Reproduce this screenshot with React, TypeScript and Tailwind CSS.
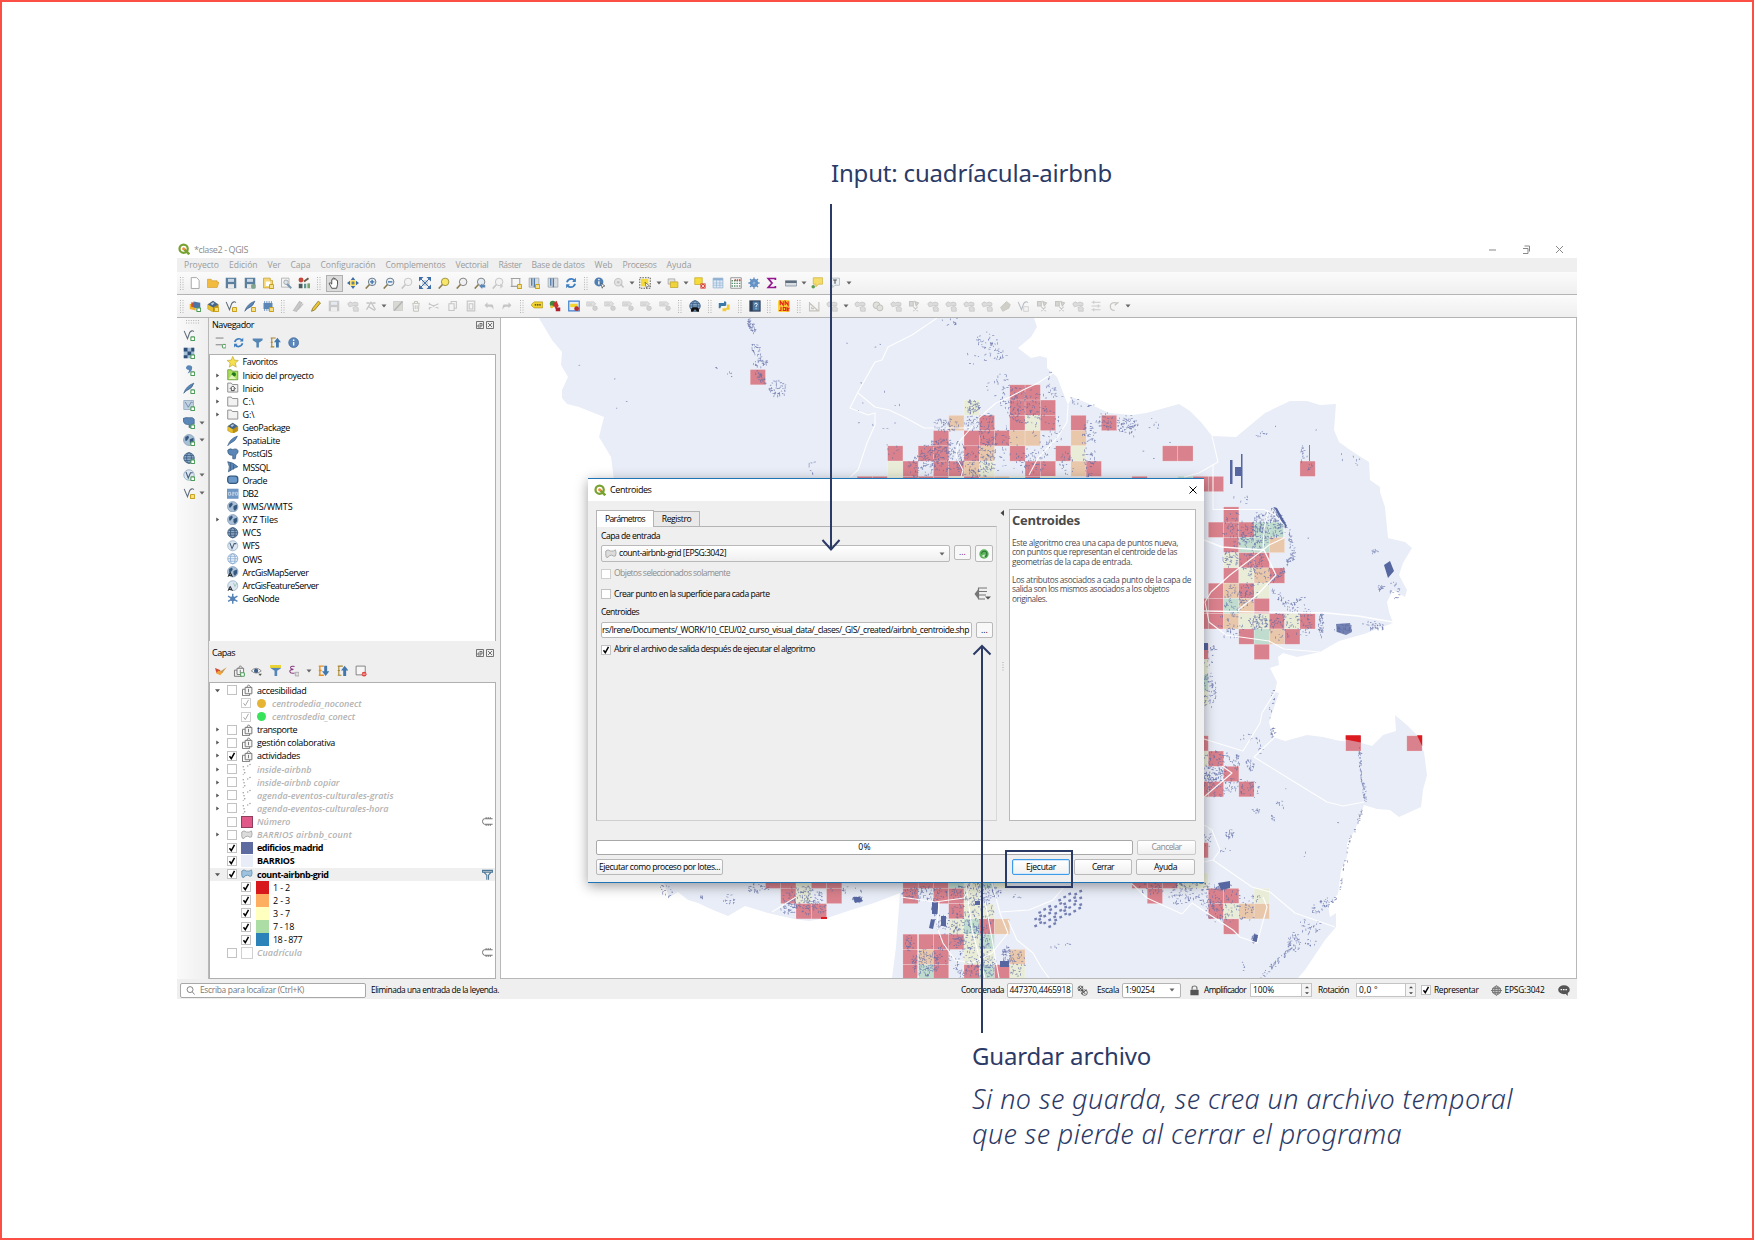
import React, { useLayoutEffect, useRef, useState } from 'react';

/* ---------- text that fills a given width ---------- */
function T({ w, children, className = '' }: { w: number; children: string; className?: string }) {
  const ref = useRef<HTMLSpanElement>(null);
  const [ls, setLs] = useState(0);
  useLayoutEffect(() => {
    if (ref.current) {
      const natural = ref.current.getBoundingClientRect().width;
      setLs((w - natural) / children.length);
    }
  }, []);
  return (
    <span ref={ref} className={'inline-block shrink-0 whitespace-pre ' + className} style={{ letterSpacing: ls }}>
      {children}
    </span>
  );
}

/* ---------- icons, all on a 16 unit grid ---------- */
const B = '#5b87b8';
const D = '#35587f';
const plus = <rect x="10.5" y="10.5" width="5" height="5" rx="1" fill="#fff" stroke="#4a9a55" strokeWidth="1.4" />;
const yplus = <rect x="10" y="10" width="5.5" height="5.5" rx="1" fill="#f7e08a" stroke="#c9a21c" strokeWidth="1.4" />;
const lens = (fill: string, stroke: string) => (
  <g>
    <circle cx="9.5" cy="6.5" r="5" fill={fill} stroke={stroke} strokeWidth="1.2" />
    <path d="M6 10L1 15.500" stroke="#8a7a50" strokeWidth="2" />
  </g>
);
const glens = (
  <g>
    <circle cx="9.5" cy="6.5" r="5" fill="#f3f3f3" stroke="#c4c4c4" strokeWidth="1.3" />
    <path d="M6 10L1 15.500" stroke="#c4c4c4" strokeWidth="2" />
  </g>
);
const globe = (f: string, s: string) => (
  <g fill="none" stroke={s} strokeWidth="1">
    <circle cx="8" cy="8" r="7" fill={f} />
    <ellipse cx="8" cy="8" rx="3.2" ry="7" />
    <path d="M1 8h14M2.2 4.6h11.6M2.2 11.4h11.6" />
  </g>
);
const earth = (
  <g>
    <circle cx="8" cy="8" r="7.3" fill="#a9bfd6" stroke="#6f8cab" strokeWidth=".8" />
    <path d="M3 4l4-2 1 3-3 4-2 0zM9 7l5-2 0 5-3 4-2-3z" fill={D} />
  </g>
);
const vee = <path d="M1.5 2.5L6 13L9 4.5Q12 1 14.5 3.5" fill="none" stroke="#5f6d7c" strokeWidth="1.4" />;
const feather = <path d="M1 15Q4 5 14.5 1.5Q13 8 4 12z" fill={B} stroke={D} strokeWidth=".8" />;
const folder = <path d="M1 14V1.500h5l1.500 2H15V14z" fill="#f2f2f2" stroke="#8b8b8b" strokeWidth="1.300" />;
const group = (
  <g fill="#f6f6f6" stroke="#777" strokeWidth="1.3">
    <path d="M5.500 4.500h9v8.500h-9z" />
    <path d="M5.500 7H2v8.500h9.500V13" fill="none" />
    <path d="M7.500 4.500L10 1l3.500 3.500M10 6.500v4.500" fill="none" />
  </g>
);
const poly = (f: string, s: string) => (
  <path d="M1 4q3-3 6 0 4 1 7-1.500 1.500 4 0 8-2 1.500-5-1-4 0-5 3-3 1-3-3z" fill={f} stroke={s} strokeWidth="1" />
);
const grayTool = (
  <g fill="#dcdcdc" stroke="#c2c2c2" strokeWidth=".9">
    <path d="M1 5q3-4.500 6.500-1 3-2.500 7 0v3.500H9L3 9z" />
    <path d="M8 10l4-1.500 3 2V15H9z" />
  </g>
);
const grayAbc = (
  <g fill="#e0e0e0" stroke="#c2c2c2" strokeWidth=".9">
    <path d="M1 2.500h9l3 2.500-3 3H1z" />
    <path d="M3 5.500h5" />
    <circle cx="12" cy="11" r="3" fill="#d3d3d3" />
  </g>
);
const refresh = (
  <g fill="none" stroke="#3f7fc0" strokeWidth="2.400">
    <path d="M2.500 7Q4 2.500 8.500 2.500q2.500 0 4 2" />
    <path d="M13.500 9Q12 13.500 7.500 13.500q-2.500 0-4-2" />
    <path d="M14.500 1v5.500H9.500zM1.500 15V9.500h5z" fill="#3f7fc0" stroke="none" />
  </g>
);
const geopkg = (
  <g>
    <path d="M1 6l7-4 7 4v6l-7 4-7-4z" fill="#e8c02c" stroke="#a8861a" strokeWidth=".6" />
    <path d="M8 9v7l7-4V6z" fill="#b98f14" />
    <path d="M1 6l7-5 7 5-7 4z" fill="#44658c" />
    <path d="M5 5l3-2 2 1-3 3z" fill="#b8cde4" />
  </g>
);
const table = (s: string, f: string) => (
  <g>
    <path d="M1.500 1.500h13v13h-13z" fill={f} stroke={s} />
    <path d="M1.500 3h13" stroke={s} strokeWidth="3" />
    <path d="M1.500 8h13M1.500 11h13M6 4v10M10.500 4v10" stroke={s} strokeWidth=".8" />
  </g>
);
const floppy = (c: string) => (
  <g>
    <path d="M1 1h14v14H1z" fill={c} />
    <path d="M4 2.500h8v4H4z" fill="#c9d8e6" />
    <path d="M4 9.500h8V15H4z" fill="#e9e9e9" />
  </g>
);
const book = (c: string) => (
  <g>
    <path d="M1.500 1.500h13v12h-13z" fill="#d9dde2" stroke="#9aa3ad" />
    <path d="M5 1.500v10M8.500 1.500v12" stroke={c} strokeWidth="1.800" />
  </g>
);
const funnel = <path d="M1 2h14v2.500L9.800 8v7H6.200V8L1 4.500z" fill="#5586b5" />;

const icons: Record<string, React.ReactNode> = {
  newf: <path d="M3 .8h7l3.500 3.500v11H3z" fill="#fff" stroke="#999" strokeWidth="1.100" />,
  open: <path d="M.5 14V3h5l1.500 2h6.500v2H16l-2.500 7z" fill="#f2bb3f" stroke="#cf972a" strokeWidth=".8" />,
  save: floppy('#5c7f9f'),
  saveas: <g>{floppy('#5c7f9f')}<rect x="9.500" y="9.500" width="6" height="6" rx="1.500" fill="#7fa38b" /></g>,
  layout: <g><path d="M2 1.500h9v3h3v10H2z" fill="#f3d774" stroke="#c59d2c" /><path d="M5 6h6v6H5z" fill="#fff" />{yplus}</g>,
  layouts: <g><path d="M2 1.500h10v12H2z" fill="#f4f4f4" stroke="#a5a5a5" /><path d="M7 7l8 8" stroke="#7695ae" strokeWidth="2.500" /><circle cx="8" cy="7" r="3" fill="#d8e4ee" stroke="#999" /></g>,
  style: <g><circle cx="4" cy="4" r="3.300" fill="#c7493c" /><path d="M8 6l6-4.500" stroke="#6d5a45" strokeWidth="2.500" /><path d="M1 9h5v6H1z" fill="#4d5d5c" /><path d="M8 9h3v6H8z" fill="#5d9690" /><path d="M12.500 8.500H16V15h-3.500z" fill="#7ca36a" /></g>,
  hand: <path d="M5 15L1.500 8.500l1.500-.8L5 9.500V3.500q1-1.500 1.800 0V1.800q1-1.300 2 0V3q1.200-1 2 .3v1q1.300-.8 1.900.5V10L11.500 15z" fill="#fff" stroke="#222" strokeWidth="1" />,
  pan: <g><rect x="4.500" y="4.500" width="7" height="7" fill="#f5d33c" /><path d="M8 0l3 4H5zM8 16l3-4H5zM0 8l4-3v6zM16 8l-4-3v6z" fill="#3d6da6" /><path d="M8 6v4M6 8h4" stroke="#3d6da6" strokeWidth="1.500" /></g>,
  zin: <g>{lens('#eef3f8', '#5a6b7c')}<path d="M9.500 3.500v6M6.500 6.500h6" stroke="#3f73aa" strokeWidth="1.800" /></g>,
  zout: <g>{lens('#eef3f8', '#5a6b7c')}<path d="M6.500 6.500h6" stroke="#3f73aa" strokeWidth="1.800" /></g>,
  z11: glens,
  zfull: <g><path d="M4 4h8v8H4z" fill="#ccd6e0" /><path d="M0 0h6L0 6zM16 0v6l-6-6zM0 16v-6l6 6zM16 16h-6l6-6z" fill="#3d6da6" /><path d="M2 2l12 12M14 2L2 14" stroke="#3d6da6" strokeWidth="1.300" /></g>,
  zsel: lens('#f8e66a', '#9b8c35'),
  zlay: lens('#f1f1f1', '#777'),
  zlast: <g>{lens('#e4edf5', '#777')}<path d="M7 12l4-3.500v2h4v3.500h-4v2z" fill="#5b87b8" /></g>,
  znext: <g>{glens}<path d="M15 12l-4-3.500v7z" fill="#ccc" /></g>,
  newmap: <g><path d="M2.500 2v11M1 2h13M13 2v10M1 12.500h9" stroke="#a0a0a0" strokeWidth="1.400" fill="none" />{yplus}</g>,
  bmk: <g>{book('#527ca8')}{yplus}</g>,
  bms: book('#527ca8'),
  refresh,
  ident: <g><circle cx="6.500" cy="6.500" r="6" fill="#4f7fb3" /><path d="M6.500 5.500V10M6.500 2.800v1.600" stroke="#fff" strokeWidth="1.800" /><path d="M9 8l5.500 4-2.500.5-1 2.500z" fill="#fff" stroke="#555" /></g>,
  gcog: <g><circle cx="7" cy="7" r="5" fill="#e4e4e4" stroke="#c4c4c4" strokeWidth="1.500" /><circle cx="7" cy="7" r="1.800" fill="#c4c4c4" /><path d="M10 9l4 5" stroke="#c4c4c4" strokeWidth="2" /></g>,
  selrect: <g><path d="M1 1h14v14H1z" fill="none" stroke="#555" strokeWidth="1.300" strokeDasharray="2 1.500" /><path d="M2.500 2.500h10v10h-10z" fill="#f4d93b" /><path d="M8 7l6 5-3 .5-1 2.500z" fill="#fff" stroke="#444" strokeWidth=".8" /></g>,
  selv: <g><path d="M1.500 2.500h9v7h-9z" fill="#e1e1e1" stroke="#a6a6a6" /><path d="M4.500 6.500h10v7.500h-10z" fill="#f0d23a" stroke="#c0a429" /></g>,
  desel: <g><path d="M1 1h10v9H1z" fill="#f6dc3a" stroke="#c7a928" /><path d="M8.500 8.500h7v7h-7z" fill="#d64a3d" /><path d="M10 10l4 4M14 10l-4 4" stroke="#fff" /></g>,
  table: table('#8fb0d0', '#dfeaf5'),
  abacus: <g><path d="M1 1h14v14H1z" fill="#fff" stroke="#777" /><path d="M2 5h12M2 8.500h12M2 12h12" stroke="#5c8f6d" strokeDasharray="2 1.300" strokeWidth="1.800" /><path d="M6 4h8" stroke="#c4453e" strokeWidth="2" strokeDasharray="2 1" /></g>,
  cog: <g><circle cx="8" cy="8" r="5" fill="#7fa6d4" stroke="#4f7fb6" /><path d="M8 .5v15M.5 8h15M2.700 2.700l10.600 10.600M13.300 2.700L2.700 13.300" stroke="#5c8cc2" strokeWidth="1.700" /><circle cx="8" cy="8" r="2" fill="#8fb3dd" /></g>,
  sigma: <path d="M12.500 4V2H3l5 6-5 6h9.500v-2" fill="none" stroke="#94168f" strokeWidth="2.300" />,
  ruler: <g><path d="M.5 5h15v7H.5z" fill="#d8dde2" stroke="#7e8a96" /><path d="M.5 5h15v3H.5z" fill="#5e6e7e" /></g>,
  tip: <g><path d="M3 1h12.500v8.500H10L6.500 13V9.500H3z" fill="#f5dd6b" stroke="#cfb343" /><circle cx="3" cy="13" r="2.400" fill="#5c9a55" /></g>,
  textann: <g><path d="M2 1.500h12v9.500H8L5 14v-3H2z" fill="#ecf0f3" stroke="#a9b4bc" /><path d="M5.500 4h5M8 4v5" stroke="#555" strokeWidth="1.500" /></g>,
  dsm: <g><path d="M1 5l8 2v7L1 12z" fill="#f0b12c" /><path d="M3 3l7 1v6l-7-1z" fill="#c9503b" /><path d="M6 2l9 1.500v8L6 10z" fill="#4d75a4" />{plus}</g>,
  geopkgn: <g>{geopkg}{yplus}</g>,
  veen: <g>{vee}{yplus}</g>,
  feathern: <g>{feather}{yplus}</g>,
  memn: <g><path d="M2 4h12v8H2z" fill={B} /><path d="M3.500 1.500v13M6.500 1.500v13M9.500 1.500v13M12.500 1.500v13" stroke={B} strokeWidth="1.200" />{yplus}</g>,
  gpencil: <path d="M2 14L10 2l3 2L6 15zM8 13L15 5" fill="#c9c9c9" stroke="#bdbdbd" strokeWidth="1.500" />,
  pencil: <path d="M2 15l1.500-4L11 1.500l3 2.500L6 13.500z" fill="#eec72f" stroke="#7d6b33" strokeWidth="1" />,
  gsave: <g opacity=".4">{floppy('#8a8a8a')}</g>,
  gtool: grayTool,
  gvert: <path d="M2 13L8 3l6 10M2 4h4M10 4h4M5 9l8 5" fill="none" stroke="#c2c2c2" strokeWidth="1.700" />,
  gmulti: <g><path d="M2 2h12v12H2z" fill="#d9d9d4" stroke="#c8c8c8" /><path d="M3 14L14 2" stroke="#b4b4b4" strokeWidth="2" /></g>,
  gtrash: <path d="M3 4.500h10M6 4V2h4v2M4 5l.8 10h6.400L12 5M7 7v5M9.500 7v5" fill="none" stroke="#c2c2bc" strokeWidth="1.300" />,
  gcut: <path d="M1 5l13 6M1 11l13-6M2 3.500v3M2 9.500v3" fill="none" stroke="#c6c6c6" strokeWidth="1.700" />,
  gcopy: <path d="M2.500 5h7v9h-7zM5.500 5V2h7v9H9.500" fill="none" stroke="#c6c6c6" strokeWidth="1.400" />,
  gpaste: <path d="M3 1.500h10v13H3zM5.500 5h5v7h-5z" fill="none" stroke="#c6c6c6" strokeWidth="1.500" />,
  gundo: <path d="M2 7l4-4v3h6q2 0 2 7-2-4-4-4H6v2z" fill="#c6c6c6" />,
  gredo: <path d="M14 7l-4-4v3H4Q2 6 2 13q2-4 4-4h4v2z" fill="#c6c6c6" />,
  abc: <g><path d="M4 2.500h11.500v8H4L0 6.500z" fill="#f3d42f" stroke="#b79b22" /><path d="M5 6.500h9" stroke="#333" strokeWidth="1.500" strokeDasharray="2 1" /></g>,
  pie: <g><circle cx="5" cy="5" r="4" fill="#3f8a3c" /><path d="M5 5l5-4 3 7-4 4z" fill="#c92f2f" /><rect x="9" y="10" width="6" height="5" fill="#a8232f" /><circle cx="3.500" cy="9" r="2" fill="#e9c02b" /></g>,
  lblb: <g><path d="M1 1.500h14v13H1z" fill="#e7eefb" stroke="#3f7fd0" strokeWidth="1.600" /><path d="M3 5h10v4.500H3z" fill="#f3d42f" /><circle cx="11.500" cy="11.500" r="3.200" fill="#b33030" /></g>,
  glabel: grayAbc,
  binoc: <g>{globe('#88a9cb', '#35587f')}<path d="M2.500 15.500q0-6 3.500-6h4q3.500 0 3.500 6H10q0-3-2-3t-2 3z" fill="#111" /></g>,
  python: <g><path d="M3 8V6h5V3Q8 1 10 2l1 1v4q0 1-2 1H5q-2 0-2 3-2-1 0-3z" fill="#3b78a8" /><path d="M1 4h8v4H4q-1 1-1 3H1z" fill="#3b78a8" /><path d="M12 6h3.500v7H11v2H6v-4h5q1-1 1-4z" fill="#f2cb3b" /></g>,
  help: <g><path d="M.5.500h15v15H.5z" fill="#2e3e57" /><path d="M5 2h9v12H5z" fill="#4f7ba7" /><path d="M7.500 6q0-1.800 1.800-1.800T11 6q0 1-1.600 2v1.500M9.400 11v1.300" stroke="#fff" strokeWidth="1.200" fill="none" /></g>,
  nn: (
    <g>
      <rect width="16" height="16" rx="2" fill="#fbd33b" />
      <path d="M3 7V1.500L7 7V1.500M9.500 7V1.500L13.500 7V1.500M4 9v5H1.500M7 10h3v4H7zM12 9v6M13.500 15v-4h2" fill="none" stroke="#e3251c" strokeWidth="1.500" />
    </g>
  ),
  gtri: <path d="M2 2.500V14.500H14.500V2.500M2 4l11 10M5 9v2.500h3" fill="none" stroke="#c6c2bc" strokeWidth="1.500" />,
  gcircle: <g fill="#e0e0dd" stroke="#c0c0bb" strokeWidth="1.300"><circle cx="6" cy="7" r="4.500" /><circle cx="10.500" cy="10.500" r="4" /></g>,
  gx: <path d="M2 2h5v6H2zM9 2l5 2-3 4zM7 9l6 6M13 9l-6 6" fill="#d6d6d2" stroke="#c4c4c0" strokeWidth="1.400" />,
  ggrid: <path d="M2 3h12M2 8h12M2 13h12M5 1v4M11 6v4M5 11v4" stroke="#ccc" strokeWidth="1.500" fill="none" />,
  grot: <path d="M12 4Q4 2 3 8q0 6 6 6M9 7l5-4" fill="none" stroke="#c4c4c0" strokeWidth="1.600" />,
  gerase: <path d="M2 10l8-8 5 4-2 5-8 4z" fill="#cfcfc8" stroke="#c4c4be" />,
  veegray: <g opacity=".4">{vee}<rect x="9" y="9" width="6" height="6" fill="none" stroke="#888" /></g>,
  vee: <g>{vee}{plus}</g>,
  raster: <g><path d="M1 1h14v14H1z" fill="#a8bfd8" /><path d="M1 1h5v5H1zM11 1h4v5h-4zM6 6h5v5H6zM1 11h5v4H1z" fill="#2e4f78" />{plus}</g>,
  comma: <g><path d="M7.500 1.500q6 0 4.500 5-1 4-6 6 2.500-3 2-4.500Q3.500 7 4 4.500 5 1.500 7.500 1.500z" fill={B} />{plus}</g>,
  featherp: <g>{feather}{plus}</g>,
  mesh: <g><path d="M1 2h13v12H1z" fill="#c1d1e1" stroke="#8ca5be" /><path d="M3 4l4 7 4-7 2 1" fill="none" stroke="#5e7b99" />{plus}</g>,
  pgp: <g><path d="M0 2q4-2 8-1 6-1 7 2v6h-3l-1 5H8V10q-6 1-8-5z" fill={B} stroke={D} strokeWidth=".8" />{plus}</g>,
  earthp: <g>{earth}{plus}</g>,
  globep: <g>{globe('#8fabc9', '#35587f')}{plus}</g>,
  wfsp: <g><circle cx="8" cy="8" r="7" fill="#dce6f0" stroke="#8fa8c1" /><path d="M4 4l3 8 3-7 3 0" fill="none" stroke="#48617c" strokeWidth="1.500" />{plus}</g>,
  veey: <g>{vee}{yplus}</g>,
  addlay: <g><path d="M1 1.500h11M1 11h9" stroke="#777" strokeWidth="1.300" />{plus}</g>,
  funnel,
  funnely: <g>{funnel}<path d="M0 0h16v4H0z" fill="#e9d335" /></g>,
  collapse: <g><path d="M1 1.500h7M1 7.500h3M1 14h5M2.500 2v12" stroke="#a8852a" strokeWidth="1.500" fill="none" /><path d="M8.500 15V7.500H5.500L10.500 1l5 6.500h-3V15z" fill="#4277ad" /></g>,
  expand: <g><path d="M1 1.500h7M1 7.500h4M1 14h7M2.500 2v12" stroke="#e0912a" strokeWidth="1.900" fill="none" /><path d="M8.500 1v7.500H5.500l5 6.500 5-6.500h-3V1z" fill="#4277ad" /></g>,
  info: <g><circle cx="8" cy="8" r="7" fill="#5a87bd" stroke="#426a9a" /><path d="M8 7v5M8 3.500v2" stroke="#fff" strokeWidth="2" /></g>,
  star: <path d="M8 .5l2.200 5.200 5.600.5-4.200 3.700 1.300 5.600L8 12.500l-4.900 3 1.300-5.600L.2 6.200l5.600-.5z" fill="#f5e04e" stroke="#b79b2a" strokeWidth=".8" />,
  projhome: <g><path d="M1 15V1h5l1.500 2H15v12z" fill="#a9dd5a" stroke="#5d8f2c" /><circle cx="9.500" cy="7.500" r="3" fill="#1e7a1d" /><path d="M2 14l5-6 6 6" fill="#dff2bf" /></g>,
  home: <g>{folder}<path d="M4 9.500L8 5.500 12 9.500M6 8.500V12h4V8.500" fill="#fff" stroke="#333" strokeWidth="1.200" /></g>,
  folder,
  geopkg,
  feather,
  pg: <path d="M1 3q3-3 7-1 6-2 7.500 2 0 4-3 5l-1 6H8V10q-5 1-6.500-3z" fill={B} stroke={D} strokeWidth="1" />,
  mssql: <path d="M1 1q8 1 14 7-6 2-13 7 3-7-1-14zM5 3v10M9 5v7" fill={B} stroke={D} strokeWidth="1" />,
  oracle: <rect x="1" y="3" width="14" height="10" rx="3.500" fill="#6b9aca" stroke={D} strokeWidth="1.800" />,
  db2: <g><path d="M0 1h16v14H0z" fill="#6f97c5" /><path d="M2 6h3v4H2zM7 6h3v2H7v2h3M12 6h2.500v4H12z" fill="none" stroke="#d6e3f1" /></g>,
  earth,
  globe: globe('#8fabc9', '#2e4a6b'),
  wfs: <g><circle cx="8" cy="8" r="7" fill="#dce6f0" stroke="#8fa8c1" /><path d="M4 4l3 8 3-7 3 0" fill="none" stroke="#48617c" strokeWidth="1.500" /></g>,
  ows: globe('#eef4fa', '#7ea3cc'),
  arcmap: <g>{earth}<path d="M1.500 15l3-6 3 6M2.500 13h4" stroke="#111" strokeWidth="1.300" fill="none" /></g>,
  arcfeat: <g><circle cx="8" cy="8" r="7" fill="#dce6f0" stroke="#8fa8c1" /><path d="M9 4l2 5 3-5" stroke="#8ba" fill="none" /><path d="M1.500 15l3-6 3 6M2.500 13h4" stroke="#111" strokeWidth="1.300" fill="none" /></g>,
  geonode: <g stroke="#5683b6" strokeWidth="2"><path d="M8 1v14M1.500 4.500l13 7M14.500 4.500l-13 7" /><circle cx="8" cy="8" r="2.500" fill="#5683b6" /></g>,
  brush: <g><path d="M0 4l7 3 1 5-6-1z" fill="#d34a32" /><path d="M1 11l6 3 4-4-6-2z" fill="#f0a338" /><path d="M7 9l9-6-6 8z" fill="#c79a4e" /></g>,
  groupp: <g>{group}{plus}</g>,
  eye: <g><path d="M.5 8Q7 1 14 8 7 14 .5 8z" fill="#fff" stroke="#666" /><circle cx="7" cy="8" r="3" fill="#3c5f88" /><path d="M10 12h5l-2.500 3z" fill="#555" /></g>,
  eps: <g><path d="M9 2Q3 1 3.500 4q.5 2 4 2Q2 6 2.500 9q.5 3 6.500 2" fill="none" stroke="#8a3d83" strokeWidth="1.500" /><path d="M10 10h5v5h-5z" fill="#ddd" stroke="#999" /></g>,
  remove: <g><path d="M1.500 1.500h12.500v12H1.500z" fill="#f6f6f6" stroke="#777" strokeWidth="1.200" /><circle cx="12.500" cy="12.500" r="3.300" fill="#e0443e" /><path d="M10.500 12.500h4" stroke="#fff" /></g>,
  group,
  points: <g fill="#9a9a9a"><circle cx="3" cy="5" r="1" /><circle cx="12" cy="2" r="1" /><circle cx="9" cy="4" r=".9" /><circle cx="4" cy="9" r="1" /><circle cx="5" cy="13" r="1.100" /><circle cx="3" cy="15" r=".8" /></g>,
  gpoly: poly('#dcdcdc', '#999'),
  bpoly: poly('#9fc3de', '#5886a8'),
  mem: <path d="M15.500 4H3.500Q.8 4 .8 7.800T3.500 12H15.500M6 1.500V4M9 1.500V4M12 1.500V4M6 12v2.500M9 12v2.500M12 12v2.500" fill="none" stroke="#666" strokeWidth="1.300" />,
  filt: <path d="M.8 2h14.400v2.500H.8zM3 5L7 9v6.500M13 5L9.500 9v6.500" fill="none" stroke="#4f7796" strokeWidth="1.600" />,
  green: <g><circle cx="8" cy="8" r="7.500" fill="#5db35c" /><path d="M4 7.500Q4.500 3.500 8.500 3.500T12.500 8 8 12" fill="none" stroke="#2c7a35" strokeWidth="1.800" /><path d="M4 11l5-2.500v5z" fill="#d9f2d7" /></g>,
  override: <path d="M5 1.500h9M5 5h9M2 8h11M5 11h6M5 14.500h9M5 1.500v13" fill="none" stroke="#777" strokeWidth="1.300" />,
  bug: <g stroke="#333" fill="none"><path d="M3 3l9 10M2 8l7-6M6 13l8-6" strokeWidth="1.200" /><circle cx="5" cy="5" r="3.500" /><circle cx="11" cy="11" r="4" /></g>,
  lock: <g><rect x="2" y="7" width="12" height="8" rx="1" fill="#555" /><path d="M4.500 7V4.500q0-3 3.500-3t3.500 3V7" fill="none" stroke="#777" strokeWidth="1.700" /></g>,
  crs: <g fill="none" stroke="#777" strokeWidth="1.400"><ellipse cx="8" cy="8" rx="6" ry="5.500" fill="#c4c4c4" /><ellipse cx="8" cy="8" rx="2.500" ry="7.500" /><path d="M0 8h16M2 5h12M2 11h12" /></g>,
  bubble: <g><ellipse cx="8" cy="7.500" rx="7.700" ry="6" fill="#555" /><path d="M9 12h4v4z" fill="#555" /><path d="M3.500 7.500h9" stroke="#fff" strokeWidth="1.600" strokeDasharray="2 1.200" /></g>,
  qgis: <g><circle cx="7.500" cy="7.500" r="5.500" fill="#fff" stroke="#78a22f" strokeWidth="3" /><path d="M8.500 8.500L15 15" stroke="#78a22f" strokeWidth="3.400" /><circle cx="7.500" cy="7.500" r="2" fill="#ee8a3c" /></g>,
};

function Icon({ n, s = 12 }: { n: string; s?: number }) {
  return (
    <svg viewBox="0 0 16 16" width={s} height={s} className="block shrink-0">
      {icons[n]}
    </svg>
  );
}

const Caret = ({ c = '#666' }: { c?: string }) => (
  <svg viewBox="0 0 6 4" width="6" height="4" className="block shrink-0"><path d="M.5.500h5L3 3.500z" fill={c} /></svg>
);

const Grip = () => (
  <svg viewBox="0 0 4 13" width="4" height="13" className="block">
    <path d="M.5 0v13M3 0v13" stroke="#b5b5b5" strokeWidth="1" strokeDasharray="1 1.400" />
  </svg>
);

/* Toolbar entries: icon name, "|width" for a grip, "v width" for a drop-down caret. */
const bar1 =
  '|9 newf open save saveas layout layouts style |12 *hand pan zin zout z11 zfull zsel zlay zlast znext newmap bmk bms refresh |11.4 ident gcog v8.3 selrect v9.8 selv v8.3 desel table abacus cog sigma ruler v8.3 tip textann v9'.split(' ');
const bar2 =
  '|9 dsm geopkgn veen feathern memn |12 gpencil pencil gsave gtool gvert v9 gmulti gtrash gcut gcopy gpaste gundo gredo |12 abc pie lblb glabel glabel glabel glabel glabel |12 binoc |11.5 python |12 help |11.4 nn |11.4 gtri gtool v9.6 gtool gcircle gtool gx gtool gtool gtool gtool gerase veegray gx gx gtool ggrid grot v9'.split(' ');

function Toolbar({ items }: { items: string[] }) {
  return (
    <div className="flex h-[23px] items-center border-b border-[#b4b4b4] bg-gradient-to-b from-[#fbfbfb] to-[#efefef]">
      {items.map((it, i) => {
        if (it[0] === '|' || /^v\d/.test(it))
          return (
            <div key={i} className="flex shrink-0 justify-center" style={{ width: parseFloat(it.slice(1)) }}>
              {it[0] === '|' ? <Grip /> : <Caret />}
            </div>
          );
        const on = it[0] === '*';
        return (
          <div key={i} className="flex w-[18.2px] shrink-0 justify-center">
            {on ? (
              <div className="flex h-[17px] w-[17px] items-center justify-center border border-[#b0b0b0] bg-[#dcdcdc]">
                <Icon n={it.slice(1)} />
              </div>
            ) : (
              <Icon n={it} />
            )}
          </div>
        );
      })}
    </div>
  );
}

const menus: [string, number][] = [
  ['Proyecto', 35], ['Edición', 28.5], ['Ver', 13], ['Capa', 20], ['Configuración', 55], ['Complementos', 60],
  ['Vectorial', 33], ['Ráster', 23], ['Base de datos', 53], ['Web', 18], ['Procesos', 34], ['Ayuda', 25],
];

const side: [string, boolean][] = [
  ['vee', false], ['raster', false], ['comma', false], ['featherp', false], ['mesh', false],
  ['pgp', true], ['earthp', true], ['globep', false], ['wfsp', true], ['veey', true],
];

const nav: [string, string, number, boolean][] = [
  ['star', 'Favoritos', 35, false], ['projhome', 'Inicio del proyecto', 71, true], ['home', 'Inicio', 21, true],
  ['folder', 'C:\\', 12, true], ['folder', 'G:\\', 12, true], ['geopkg', 'GeoPackage', 47.5, false],
  ['feather', 'SpatiaLite', 37.5, false], ['pg', 'PostGIS', 29.5, false], ['mssql', 'MSSQL', 27.5, false],
  ['oracle', 'Oracle', 24.5, false], ['db2', 'DB2', 15.5, false], ['earth', 'WMS/WMTS', 50, false],
  ['earth', 'XYZ Tiles', 35.5, true], ['globe', 'WCS', 18.5, false], ['wfs', 'WFS', 17, false], ['ows', 'OWS', 19.5, false],
  ['arcmap', 'ArcGisMapServer', 66, false], ['arcfeat', 'ArcGisFeatureServer', 76, false], ['geonode', 'GeoNode', 36.5, false],
];

function Arrow({ open }: { open?: boolean }) {
  return (
    <svg viewBox="0 0 6 6" width="5" height="5" className="block shrink-0">
      <path d={open ? 'M0 1.500h6L3 5z' : 'M1.500.500v5L5 3z'} fill="#555" />
    </svg>
  );
}

function Check({ on, dim }: { on?: boolean; dim?: boolean }) {
  return (
    <span className={'flex h-[10px] w-[10px] shrink-0 border bg-white ' + (dim ? 'border-[#cfcfcf]' : 'border-[#c2c2c2]')}>
      {on && (
        <svg viewBox="0 0 8 8" width="8" height="8" className="block">
          <path d="M1.500 4.200L3.300 6.600L6.500.800" fill="none" stroke={dim ? '#aaa' : '#000'} strokeWidth={dim ? 1 : 1.500} />
        </svg>
      )}
    </span>
  );
}

type Layer = { t: string; w: number; a?: 'o' | 'c'; on?: boolean; i?: string; sw?: string; dot?: string; lvl?: number; k?: 'dim' | 'bold'; r?: string };
const layers: Layer[] = [
  { t: 'accesibilidad', w: 49.5, a: 'o', i: 'group' },
  { t: 'centrodedia_noconect', w: 89.5, on: true, dot: 'bg-[#e6b333]', lvl: 1, k: 'dim' },
  { t: 'centrosdedia_conect', w: 83, on: true, dot: 'bg-[#38e35c]', lvl: 1, k: 'dim' },
  { t: 'transporte', w: 40, a: 'c', i: 'group' },
  { t: 'gestión colaborativa', w: 78, a: 'c', i: 'group' },
  { t: 'actividades', w: 43, a: 'c', on: true, i: 'group' },
  { t: 'inside-airbnb', w: 54.5, a: 'c', i: 'points', k: 'dim' },
  { t: 'inside-airbnb copiar', w: 82.5, a: 'c', i: 'points', k: 'dim' },
  { t: 'agenda-eventos-culturales-gratis', w: 136.5, a: 'c', i: 'points', k: 'dim' },
  { t: 'agenda-eventos-culturales-hora', w: 131.5, a: 'c', i: 'points', k: 'dim' },
  { t: 'Número', w: 33.5, sw: 'bg-[#e15989] border border-[#8d3f5b]', k: 'dim', r: 'mem' },
  { t: 'BARRIOS airbnb_count', w: 95, a: 'c', i: 'gpoly', k: 'dim' },
  { t: 'edificios_madrid', w: 66, on: true, sw: 'bg-[#5d6ba0]', k: 'bold' },
  { t: 'BARRIOS', w: 37.5, on: true, sw: 'bg-[#e9edf8]', k: 'bold' },
  { t: 'count-airbnb-grid', w: 71.5, a: 'o', on: true, i: 'bpoly', k: 'bold', r: 'filt' },
  { t: '1 - 2', w: 17, on: true, sw: 'bg-[#d7191c]', lvl: 2 },
  { t: '2 - 3', w: 17, on: true, sw: 'bg-[#fdae61]', lvl: 2 },
  { t: '3 - 7', w: 17, on: true, sw: 'bg-[#ffffbf]', lvl: 2 },
  { t: '7 - 18', w: 21, on: true, sw: 'bg-[#abdda4]', lvl: 2 },
  { t: '18 - 877', w: 29, on: true, sw: 'bg-[#2b83ba]', lvl: 2 },
  { t: 'Cuadrícula', w: 45, sw: 'bg-white border border-[#d0d0d0]', k: 'dim', r: 'mem' },
];

function LayerRow({ l }: { l: Layer }) {
  const tone = l.k === 'dim' ? 'italic font-semibold text-[#b3b3b3]' : l.k === 'bold' ? 'font-bold text-black' : 'text-black';
  return (
    <div className={'flex h-[13.13px] shrink-0 items-center pr-[2px] ' + (l.r === 'filt' ? 'bg-[#efefef]' : '')}>
      <div className={'flex shrink-0 pl-[4.5px] ' + (l.lvl ? 'w-[31px]' : 'w-[17px]')}>{l.a && <Arrow open={l.a === 'o'} />}</div>
      <Check on={l.on} dim={l.lvl === 1} />
      <div className={'flex shrink-0 items-center ' + (l.lvl === 1 ? 'w-[21px] pl-[6px]' : l.lvl === 2 ? 'w-[22px] pl-[5px]' : 'w-[20px] pl-[4px]')}>
        {l.dot && <span className={'h-[9px] w-[9px] rounded-full ' + l.dot} />}
        {l.sw && <span className={(l.lvl ? 'h-[13.2px] w-[13px] ' : 'h-[12px] w-[12px] ') + l.sw} />}
        {l.i && <Icon n={l.i} />}
      </div>
      <T w={l.w} className={tone}>{l.t}</T>
      <span className="flex-1" />
      {l.r && <Icon n={l.r} s={11} />}
    </div>
  );
}

function PanelTitle({ t, w, h }: { t: string; w: number; h: string }) {
  return (
    <div className={'flex shrink-0 items-center pr-[6px] pl-[3px] ' + h}>
      <T w={w} className="text-[9px]">{t}</T>
      <span className="flex-1" />
      <svg viewBox="0 0 18 8" width="18" height="8" className="block">
        <path d="M.5.500h7v7h-7zM10.500.500h7v7h-7zM12 2l4 4M16 2l-4 4M2 4h3v2H2zM3.500 2.500H6V5" fill="none" stroke="#666" strokeWidth=".9" />
      </svg>
    </div>
  );
}

/* ---------- map ---------- */
const land =
  'M539 318L546 330L552 340L562 352L561 365L568 377L562 390L562 398L567 404L579 407L604 417L599 437L611 457L614 480L640 700L664 883L669 897L678 892L688 900L698 903L713 910L728 916L745 906L768 913L794 919L809 921L827 918L851 910L874 903L900 893L896 947L892 978L1298 978L1305 970L1315 955L1325 940L1336 927L1336 913L1330 917L1328 905L1338 894L1341 870L1347 857L1347 843L1355 830L1360 817L1364 805L1377 809L1390 810L1399 817L1421 807L1423 790L1427 775L1424 752L1417 735L1408 726L1395 715L1396 731L1383 735L1372 746L1358 742L1340 741L1323 737L1307 735L1285 741L1273 737L1269 722L1279 693L1275 692L1277 682L1270 668L1279 665L1278 657L1283 653L1297 657L1320 652L1339 641L1364 634L1393 623L1389 612L1387 602L1393 590L1405 597L1407 590L1399 575L1403 563L1412 548L1405 542L1388 538L1385 507L1380 492L1380 487L1370 480L1369 462L1353 452L1339 442L1334 430L1336 404L1320 405L1307 401L1290 401L1265 413L1236 437L1212 436L1201 422L1190 411L1179 404L1161 409L1146 413L1132 415L1109 413L1092 405L1072 397L1068 405L1057 377L1047 368L1047 358L1040 356L1031 358L1018 348L1031 337L1037 327L1034 318Z';

/* Count classes per grid row: row number, then column:class pairs. */
const grid =
  '-1 -17R;0 0R 1R;1 0R 1R 2R -3Y;2 0R 1Y 2R -4O -2R 4R 6R;3 -5R -3R -2R -1R 0O 1O 4O;4 -8R -6R -5R -3R -2O 0R 3R 4Y 10R 11R;5 -8Y -7R -5R -4R -3O -2Y 1R 2R 4O 5R 19R;6 -10R -9R -8Y -7R -6R -5R -4Y -3R -2O -1O 0Y 1R 2Y 8R 11G 12R 13R;8 14R;9 13R 14R 15R 16G 17G;10 14R 15G 16G 17O;11 14Y 15R 16R;12 14R 15Y 16O 17R;13 13R 14O 15R 16Y;14 12R 13R 14G 15O 16R;15 12R 13R 14O 15Y 16Y 17R 18Y 19R;16 15R 16G 17O 18R;17 12R 16R;18 12Y;19 12G;20 12Y;23 12R 22R 26R;24 12Y 13R;25 14R;26 12R 13R 15R;30 12R;32 -16R -15R -14Y -13R -12R -7R -6R -5R -4G -3Y -2G -1Y 8R 9R 10R 11Y 12Y;33 -15R -14Y -12R -7R -5R -4R -3Y 9R 13R 14R 16Y;34 -14R -13R -4R -3Y -2Y 13R 14Y 15O 16O;35 -4Y -3G -2R -1O 14R;36 -7R -6R -5R -4R -3Y -2G;37 -7R -6O -5R -3Y -2Y 0O;38 -7R -6G -5R -3R -2G -1R 0Y';
const classFill: Record<string, string> = { R: '#d9818c', O: '#e9c7ab', Y: '#e9edd7', G: '#c0dccf' };
const cells = grid.split(';').flatMap((row) => {
  const [r, ...cs] = row.split(' ');
  return cs.map((c) => ({ x: 1009.8 + 15.27 * parseInt(c), y: 384.8 + 15.26 * parseInt(r), f: classFill[c[c.length - 1]] }));
});

/* Building clusters: centre, radii, count, rotation. */
const clusters: number[][] = [
  [751, 326, 3, 8, 65, -20], [756, 350, 4, 9, 40, -25], [760, 363, 7, 4, 50, 0], [760, 377, 3, 8, 50, -35], [777, 388, 9, 8, 80, 40], [716, 369, 2, 2, 3, 0],
  [730, 374, 4, 2, 7, 40], [811, 465, 3, 9, 10, 0], [953, 321, 12, 5, 16, 0], [987, 340, 11, 9, 55, 0], [997, 354, 9, 6, 35, 0], [975, 356, 14, 8, 14, 0],
  [875, 410, 26, 26, 16, 0], [1000, 385, 14, 12, 30, 0], [946, 424, 13, 7, 100, 0], [972, 406, 7, 7, 90, 0], [972, 422, 8, 7, 60, 0], [987, 440, 9, 30, 200, 0],
  [944, 455, 25, 17, 330, 0], [920, 466, 13, 12, 90, 0], [975, 465, 20, 14, 200, 0], [1005, 450, 16, 25, 60, 0], [1010, 400, 11, 16, 50, 0], [1026, 405, 22, 18, 190, 0],
  [1045, 430, 17, 25, 80, 0], [1032, 460, 18, 13, 110, 0], [1053, 391, 6, 12, 30, -40], [1078, 402, 10, 4, 12, 20], [1090, 405, 4, 2, 10, 0], [1088, 450, 7, 32, 130, 0],
  [1067, 463, 8, 12, 45, 0], [1105, 420, 9, 9, 55, 0], [1127, 424, 11, 9, 120, 0], [1152, 423, 6, 8, 9, -30], [1048, 372, 3, 8, 8, 0], [890, 450, 8, 10, 12, 0],
  [1261, 434, 6, 3, 14, 0], [1355, 462, 5, 8, 8, -30], [1302, 453, 1.5, 9, 26, 0], [1310, 467, 3, 4, 12, 0], [1240, 497, 8, 4, 8, 0],
  [1268, 525, 17, 14, 260, 0], [1254, 537, 14, 12, 180, 0], [1278, 518, 4, 14, 60, -30], [1234, 530, 12, 18, 100, 0], [1230, 558, 8, 8, 70, 0], [1250, 560, 14, 12, 90, 0],
  [1262, 575, 16, 9, 80, 0], [1247, 595, 10, 13, 100, 0], [1232, 600, 9, 16, 90, 0], [1288, 560, 6, 2, 30, -60], [1290, 538, 2, 10, 30, 0], [1292, 553, 2, 9, 30, 0], [1280, 572, 7, 3, 30, -45],
  [1283, 600, 16, 4, 60, 45], [1298, 600, 9, 4, 25, -40], [1230, 625, 13, 14, 70, 0], [1258, 622, 10, 8, 140, 0], [1280, 625, 12, 15, 90, 0], [1302, 620, 10, 17, 90, 0],
  [1321, 624, 3, 12, 70, 0], [1343, 628, 9, 5, 60, 0], [1373, 625, 12, 4, 55, 10], [1380, 587, 3, 3, 25, 0], [1395, 588, 6, 10, 26, 0],
  [1374, 551, 4, 2, 14, 0], [1213, 648, 3, 3, 20, 0], [1208, 690, 8, 18, 120, 0], [1271, 705, 2, 16, 16, 8], [1272, 730, 3, 7, 25, 0], [1245, 738, 9, 4, 10, -30], [1258, 745, 5, 10, 14, -20],
  [1216, 760, 14, 10, 80, 0], [1212, 775, 14, 9, 160, 0], [1212, 790, 13, 8, 50, 0], [1236, 762, 4, 8, 40, 0], [1250, 764, 5, 6, 40, 0], [1233, 785, 10, 8, 50, 0],
  [1250, 789, 10, 9, 50, 0], [1255, 810, 5, 2, 18, 0], [1272, 817, 4, 2, 14, 50], [1280, 804, 4, 5, 12, 0], [1229, 833, 4, 5, 40, 0], [1208, 835, 5, 12, 18, 0],
  [1222, 886, 10, 3, 90, -15], [1205, 900, 14, 9, 50, 0], [1225, 905, 24, 18, 150, 0], [1247, 910, 9, 14, 26, 0], [1254, 938, 2.5, 5, 50, 0], [1256, 897, 5, 4, 14, 0],
  [1320, 905, 11, 5, 60, -35], [1310, 925, 12, 8, 40, 0], [1293, 942, 7, 10, 70, 0], [1275, 963, 2.5, 22, 70, 45], [1310, 943, 6, 4, 16, 0], [1243, 965, 1.5, 7, 8, 0],
  [1360, 765, 1.2, 22, 60, -5], [1364, 792, 1.2, 12, 36, -5], [1357, 822, 1, 14, 22, 18], [1348, 845, 1, 10, 14, 15], [1342, 873, 1, 18, 18, 8], [1333, 900, 1.5, 8, 18, 45],
  [666, 890, 5, 8, 26, -30], [701, 897, 2, 2.5, 12, 0], [728, 899, 7, 5, 24, 0], [757, 888, 12, 6, 50, 0], [802, 897, 20, 12, 230, 0], [788, 908, 10, 6, 60, 0],
  [812, 908, 16, 6, 60, 0], [857, 899, 6, 4, 50, 0], [848, 889, 22, 3, 18, 0], [925, 893, 24, 7, 160, 0], [975, 892, 26, 9, 270, 0], [934, 908, 3, 8, 70, 0],
  [940, 922, 8, 8, 50, 20], [958, 925, 12, 22, 160, 0], [980, 915, 14, 18, 170, 0], [975, 945, 16, 22, 220, 0], [925, 962, 14, 14, 250, 0], [948, 948, 18, 16, 70, 0],
  [909, 943, 5, 8, 45, 0], [985, 966, 12, 12, 140, 0], [963, 970, 10, 9, 70, 0], [1006, 955, 5, 10, 90, 0], [1016, 963, 9, 14, 70, 0], [1014, 897, 6, 4, 10, 0],
  [1060, 945, 10, 2, 10, -10], [1180, 893, 12, 12, 100, 0], [1150, 888, 14, 6, 40, 0], [1218, 912, 12, 10, 40, 0],
  [1200, 886, 16, 4, 50, 0], [1208, 660, 5, 12, 14, 0], [1225, 850, 6, 3, 8, 0], [1300, 480, 60, 60, 14, 0], [1310, 830, 60, 50, 8, 0], [640, 380, 90, 40, 6, 0], [1150, 440, 40, 20, 5, 0],
  [870, 360, 30, 30, 5, 0],
];

/* Rows of slanted blocks south of the ring road. */
const blocks = [0, 1, 2, 3, 4, 5, 6].flatMap((r) =>
  [0, 1, 2, 3, 4, 5, 6, 7, 8, 9].map((c) => ({ x: 1033 + c * 5 + (r % 2), y: 921 - c * 3.1 + r * 3.4 - 6, keep: (c * 7 + r * 5) % 9 > 2 && !(c < 3 && r > 4) && !(c > 7 && r < 1) })),
).filter((b) => b.keep);

function buildingsPath() {
  let seed = 77;
  const rnd = () => {
    seed = (seed * 1664525 + 1013904223) % 4294967296;
    return seed / 4294967296;
  };
  let d = '';
  for (const [cx, cy, rx, ry, n, rot] of clusters) {
    const a = (rot * Math.PI) / 180;
    for (let i = 0; i < n * 0.62; i++) {
      const t = rnd() * Math.PI * 2;
      const q = Math.sqrt(rnd());
      const ux = Math.cos(t) * q * rx;
      const uy = Math.sin(t) * q * ry;
      const x = cx + ux * Math.cos(a) - uy * Math.sin(a);
      const y = cy + ux * Math.sin(a) + uy * Math.cos(a);
      const long = rnd() > 0.5;
      const w = long ? 0.6 : 1 + rnd() * 1.3;
      const h = long ? 1 + rnd() * 1.5 : 0.6;
      const k = rnd() * 1.2 - 0.6;
      d += `M${x.toFixed(1)} ${y.toFixed(1)}l${w.toFixed(1)} ${k.toFixed(1)}l${(-k).toFixed(1)} ${h.toFixed(1)}l${(-w).toFixed(1)} ${(-k).toFixed(1)}z`;
    }
  }
  return d;
}
const buildings = buildingsPath();

function CityMap() {
  return (
    <svg viewBox="501 318 1075 660" width="1075" height="660" className="block">
      <path d={land} fill="#e9edf7" />
      <g stroke="#fff" strokeOpacity=".35" strokeWidth=".6">
        {cells.map((c, i) => (
          <rect key={i} x={c.x} y={c.y} width="15.27" height="15.26" fill={c.f} />
        ))}
      </g>
      <path d="M1345.700 735.300h15v7.200l-15-3zM1417 735.300h5.200v11zM821 917h6v2h-6z" fill="#db1b20" />
      <path d={buildings} fill="#5f6ca6" fillOpacity=".85" />
      <path d={blocks.map((b) => `M${b.x} ${b.y}l2.600-1 .8 2.200-2.600 1z`).join('')} fill="#5f6ca6" fillOpacity=".85" />
      <g fill="#5666a1">
        <path d="M1230 460h2.500v24h-2.500zM1241 454h1.500v34h-1.500zM1235 467h6v9h-6z" />
        <path d="M1274 507l3 1 10 18-2 2zM1384 565l6-4 4 10-6 7z" />
        <path d="M1336 624l14-1 2 9-6 3-9-3zM1309 445h1v16h-1z" opacity=".8" />
        <path d="M932 902h6v12h-6zM941 916h5v10h-5zM931 919l4 1-2 9-4-1zM975 901h5v4h-5zM1000 961h9v6h-9z" />
        <path d="M1218 883l12-2 0 7-9 2zM1254 934l4 1-1 7-4-1zM853 897l7 0 3 4-8 2zM1202 643h6v7h-6z" />
      </g>
      <g fill="none" stroke="#fff" strokeWidth="1.100" strokeOpacity=".95" strokeLinejoin="round">
        <path d="M937 318L912 335L888 347L882 360L875 362L858 392L850 408L868 415L875 413L875 425L867 443L858 470L850 477" />
        <path d="M858 393L875 407L889 410L906 418L924 428L965 428L972 427L980 417L996 403L1010 397L1023 390L1038 383L1056 371" />
        <path d="M972 427L958 443L956 457L963 470L961 477" />
        <path d="M1068 405L1067 422L1057 438L1038 458L1029 475" />
        <path d="M1212 436L1218 462L1199 473L1184 477M1213 465V509.500H1264L1275 515L1284 525L1284 538L1269 545L1263 550L1230 575L1211 592L1205 602L1209 622L1226 635L1269 641L1284 649L1320 652" />
        <path d="M1204 540L1222 547L1264 550L1276 575L1257 595L1238 610M1204 611L1326 613L1358 616L1393 622" strokeWidth="1.400" />
        <path d="M1263 550L1264 530L1268 510" />
        <path d="M1204 739L1243 751L1260 723L1262 713L1275 692M1275 737L1254 757L1327 802L1343 806L1364 802" />
        <path d="M1204 797L1232 773L1222 766M1204 825L1212 830L1220 850L1213 860L1252 887L1270 892L1295 913L1335 927M1213 860L1204 862" />
        <path d="M1131 883L1147 898L1182 914L1192 903L1233 930L1240 937L1257 943L1267 907L1263 897" />
        <path d="M772 912L796 897M901 897L935 902L964 898L972 883M1000 912L1029 910L1053 900L1064 887" />
        <path d="M939 902L937 927L943 943L955 960L972 963L992 953L1008 933L1000 913L992 883" />
        <path d="M1008 920L1017 940L1033 953L1041 967L1049 978M966 883L972 930L985 978M918 934V978M985 900L999 978" />
      </g>
    </svg>
  );
}

/* ---------- dialog ---------- */
function Btn({ w, t, tw, cls = '' }: { w: string; t: string; tw: number; cls?: string }) {
  return (
    <div className={'flex shrink-0 items-center justify-center rounded-[2px] border bg-gradient-to-b from-white to-[#f0f0f0] ' + w + ' ' + (cls || 'border-[#b9b9b9] text-black')}>
      <T w={tw}>{t}</T>
    </div>
  );
}

function Dialog() {
  return (
    <div className="absolute top-[238px] left-[411px] flex h-[405px] w-[616px] flex-col border-y border-[#1f74b5] bg-[#efefef] text-[8.6px] leading-none shadow-[0_3px_12px_rgba(0,0,0,0.38)]">
      <div className="flex h-[22px] shrink-0 items-center bg-white pr-[7px] pb-[1px] pl-[6px]">
        <Icon n="qgis" />
        <T w={41.5} className="ml-[4px] text-[9px]">Centroides</T>
        <span className="flex-1" />
        <svg viewBox="0 0 8 8" width="8" height="8"><path d="M.5.500l7 7M7.500.500l-7 7" stroke="#000" strokeWidth="1" /></svg>
      </div>
      <div className="flex h-[320px] shrink-0 pt-[8px] pl-[8px]">
        <div className="flex w-[401px] shrink-0 flex-col pt-[1px]">
          <div className="flex h-[16px] items-end">
            <div className="relative z-10 -mb-px flex h-[17px] w-[58px] items-center justify-center border border-b-0 border-[#b4b4b4] bg-white pt-[1px]"><T w={40}>Parámetros</T></div>
            <div className="flex h-[15px] w-[46px] items-center justify-center border border-b-0 border-l-0 border-[#b4b4b4] bg-[#e9e9e9] pt-[1px]"><T w={29.5}>Registro</T></div>
          </div>
          <div className="flex flex-1 flex-col border border-[#b4b4b4] border-r-[#d8d8d8] border-b-[#cfcfcf] pr-[3px] pl-[4px]">
            <div className="flex h-[18px] items-center"><T w={59}>Capa de entrada</T></div>
            <div className="flex h-[17px] items-start">
              <div className="flex h-[17px] w-[349px] items-center rounded-[2px] border border-[#b9b9b9] bg-gradient-to-b from-white to-[#efefef] pr-[4px] pl-[3px]">
                <Icon n="gpoly" />
                <T w={107} className="ml-[2px]">count-airbnb-grid [EPSG:3042]</T>
                <span className="flex-1" />
                <Caret />
              </div>
              <div className="ml-[4px] flex h-[15px] w-[17px] items-center justify-center rounded-[2px] border border-[#b9b9b9] bg-[#f8f8f8] text-[#6a1a6a]">...</div>
              <div className="ml-[4px] flex h-[17px] w-[18px] items-center justify-center rounded-[2px] border border-[#b9b9b9] bg-[#f8f8f8]"><Icon n="green" s={10} /></div>
            </div>
            <div className="flex h-[23px] items-center"><Check dim /><T w={116} className="ml-[3px] text-[#8d8d8d]">Objetos seleccionados solamente</T></div>
            <div className="flex h-[18px] items-center">
              <Check /><T w={155.5} className="ml-[3px]">Crear punto en la superficie para cada parte</T>
              <span className="flex-1" />
              <svg viewBox="0 0 17 14" width="17" height="14" className="mr-[2px]">
                <path d="M4 2.500L.5 7 4 11.500z" fill="#777" />
                <path d="M4 1h9M4 4.500h9M4 8h8M4 12h7M4.500 1v11" fill="none" stroke="#777" strokeWidth="1.200" />
                <path d="M11 9.500h6l-3 3z" fill="#555" />
              </svg>
            </div>
            <div className="flex h-[19px] items-center"><T w={38}>Centroides</T></div>
            <div className="flex h-[16px]">
              <div className="flex w-[371px] items-center overflow-hidden rounded-[2px] border border-[#b9b9b9] bg-white">
                <T w={367}>rs/Irene/Documents/_WORK/10_CEU/02_curso_visual_data/_clases/_GIS/_created/airbnb_centroide.shp</T>
              </div>
              <div className="ml-[4px] flex w-[17px] items-center justify-center rounded-[2px] border border-[#b9b9b9] bg-[#f8f8f8]">...</div>
            </div>
            <div className="flex h-[23px] items-center"><Check on /><T w={201} className="ml-[3px]">Abrir el archivo de salida después de ejecutar el algoritmo</T></div>
          </div>
        </div>
        <div className="flex w-[12px] flex-col items-center pt-[1px] pr-[3px]">
          <svg viewBox="0 0 4 6" width="4" height="6"><path d="M4 0v6L.5 3z" fill="#444" /></svg>
          <div className="mt-[146px] ml-[3px]"><svg viewBox="0 0 2 10" width="2" height="10"><path d="M1 0v10" stroke="#aaa" strokeDasharray="1 1.500" /></svg></div>
        </div>
        <div className="w-[187px] shrink-0 border border-[#b9b9b9] bg-white px-[2px] pt-[4px] text-[8.3px] text-[#4c4c55]">
          <div className="flex h-[13px] items-center"><T w={68} className="text-[13px] font-bold text-[#4a4a4a]">Centroides</T></div>
          <div className="flex flex-col items-start pt-[11px] leading-[9.3px]">
            <T w={166}>Este algoritmo crea una capa de puntos nueva,</T>
            <T w={165}>con puntos que representan el centroide de las</T>
            <T w={120}>geometrías de la capa de entrada.</T>
            <div className="h-[9.3px]" />
            <T w={179}>Los atributos asociados a cada punto de la capa de</T>
            <T w={157}>salida son los mismos asociados a los objetos</T>
            <T w={35}>originales.</T>
          </div>
        </div>
      </div>
      <div className="mt-[19px] flex h-[15px] gap-[4px] pl-[8px]">
        <div className="flex w-[537px] items-center justify-center rounded-[2px] border border-[#a8a8a8] bg-white"><T w={12.5}>0%</T></div>
        <Btn w="w-[59px]" t="Cancelar" tw={30} cls="border-[#c9c9c9] text-[#8d8d8d]" />
      </div>
      <div className="mt-[4px] flex h-[16px] gap-[4px] pl-[8px]">
        <Btn w="w-[127px]" t="Ejecutar como proceso por lotes..." tw={121} />
        <div className="w-[281px]" />
        <Btn w="w-[58px]" t="Ejecutar" tw={30} cls="border-[#3d9be9] text-black shadow-[inset_0_0_0_1px_#cfe8fb]" />
        <Btn w="w-[58px]" t="Cerrar" tw={22} />
        <Btn w="w-[59px]" t="Ayuda" tw={23} />
      </div>
    </div>
  );
}

function Spin({ w, t, tw }: { w: string; t: string; tw: number }) {
  return (
    <div className={'flex h-[14px] shrink-0 items-center border border-[#c4c4c4] bg-white pl-[2px] ' + w}>
      <T w={tw}>{t}</T>
      <span className="flex-1" />
      <div className="flex h-full w-[10px] flex-col items-center justify-center gap-[3px] border-l border-[#c4c4c4] bg-[#f4f4f4]">
        <svg viewBox="0 0 4 2" width="4" height="2.5" className="block"><path d="M0 2h4L2 0z" fill="#444" /></svg>
        <svg viewBox="0 0 4 2" width="4" height="2.5" className="block"><path d="M0 0h4L2 2z" fill="#444" /></svg>
      </div>
    </div>
  );
}

export default function App() {
  return (
    <div className="relative h-[1240px] w-[1754px] overflow-hidden border-2 border-[#fb4f45] bg-white font-['Open_Sans','Noto_Sans',sans-serif] text-[9px] leading-none text-black">
      <div className="relative mt-[238px] ml-[175px] flex h-[759px] w-[1400px] flex-col bg-white">
        <div className="flex h-[18px] shrink-0 items-center pl-[1px] text-[#8c8c8c]">
          <Icon n="qgis" s={12} />
          <T w={54} className="ml-[4px]">*clase2 - QGIS</T>
          <span className="flex-1" />
          <svg viewBox="0 0 76 9" width="76" height="9" className="mr-[12px]">
            <path d="M0 5h7M34 3.500h5v5h-5M35.500 1h5v5.500M67 1l7 7M74 1l-7 7" fill="none" stroke="#888" />
          </svg>
        </div>
        <div className="flex h-[14px] shrink-0 items-center gap-[10px] bg-[#efefef] pl-[7px] text-[8.6px] text-[#9b9b9b]">
          {menus.map(([m, w]) => <T key={m} w={w}>{m}</T>)}
        </div>
        <Toolbar items={bar1} />
        <Toolbar items={bar2} />
        <div className="flex h-[661px] shrink-0">
          <div className="flex w-[32px] shrink-0 flex-col border-r border-[#b8b8b8] bg-gradient-to-r from-[#fafafa] to-[#efefef]">
            <div className="flex h-[8.3px] items-center justify-center">
              <svg viewBox="0 0 13 4" width="13" height="4"><path d="M0 .5h13M0 3h13" stroke="#b5b5b5" strokeDasharray="1 1.400" /></svg>
            </div>
            {side.map(([n, v], i) => (
              <div key={i} className="flex h-[17.5px] shrink-0 items-center gap-[4px] pl-[5.5px]">
                <Icon n={n} />
                {v && <Caret />}
              </div>
            ))}
          </div>
          <div className="flex w-[291px] shrink-0 flex-col bg-[#efefef]">
            <PanelTitle t="Navegador" w={42} h="h-[14px] pb-[1px]" />
            <div className="flex h-[22px] shrink-0 items-center gap-[7px] pl-[6px]">
              {['addlay', 'refresh', 'funnel', 'collapse', 'info'].map((n) => <Icon key={n} n={n} s={11.3} />)}
            </div>
            <div className="flex h-[287px] w-[287px] shrink-0 flex-col border border-b-0 border-[#b0b0b0] bg-white pt-[0.4px]">
              {nav.map(([ic, t, w, a], i) => (
                <div key={i} className="flex h-[13.15px] shrink-0 items-center">
                  <div className="flex w-[17px] shrink-0 pl-[4.5px]">{a && <Arrow />}</div>
                  <Icon n={ic} s={11.5} />
                  <T w={w} className="ml-[4px]">{t}</T>
                </div>
              ))}
            </div>
            <PanelTitle t="Capas" w={23} h="h-[21px] pt-[2px]" />
            <div className="flex h-[20px] shrink-0 items-center gap-[6.5px] pb-[2px] pl-[6px]">
              {['brush', 'groupp', 'eye', 'funnely', 'eps'].map((n) => <Icon key={n} n={n} s={11.7} />)}
              <Caret />
              {['expand', 'collapse', 'remove'].map((n) => <Icon key={n} n={n} s={11.7} />)}
            </div>
            <div className="flex h-[297px] w-[287px] shrink-0 flex-col border border-[#b0b0b0] bg-white pt-[0.8px]">
              {layers.map((l) => <LayerRow key={l.t} l={l} />)}
            </div>
          </div>
          <div className="w-[1077px] shrink-0 border border-t-0 border-[#b8b8b8] bg-white">
            <CityMap />
          </div>
        </div>
        <div className="flex h-[20px] shrink-0 items-center bg-[#efefef] pt-[2px] pl-[3px] text-[8.4px]">
          <div className="flex h-[15px] w-[186px] shrink-0 items-center rounded-[2px] border border-[#a8a8a8] bg-white pl-[5px] text-[#777]">
            <svg viewBox="0 0 10 10" width="9" height="9" className="mr-[5px]"><circle cx="4.5" cy="4" r="3.3" fill="none" stroke="#777" /><path d="M7 6.500L9.500 9.500" stroke="#777" /></svg>
            <T w={104}>Escriba para localizar (Ctrl+K)</T>
          </div>
          <T w={128} className="ml-[5px]">Eliminada una entrada de la leyenda.</T>
          <div className="w-[462px] shrink-0" />
          <T w={43}>Coordenada</T>
          <div className="ml-[3px] flex h-[15px] w-[66px] shrink-0 items-center rounded-[2px] border border-[#b4b4b4] bg-white pl-[1.5px]"><T w={61}>447370,4465918</T></div>
          <div className="ml-[4px]"><Icon n="bug" s={11} /></div>
          <T w={22} className="ml-[9px]">Escala</T>
          <div className="ml-[3px] flex h-[15px] w-[59px] shrink-0 items-center rounded-[2px] border border-[#b4b4b4] bg-white pr-[5px] pl-[2px]"><T w={29.5}>1:90254</T><span className="flex-1" /><Caret /></div>
          <div className="ml-[8px]"><Icon n="lock" s={11} /></div>
          <T w={42} className="ml-[4px]">Amplificador</T>
          <div className="ml-[4px]"><Spin w="w-[62px]" t="100%" tw={21} /></div>
          <T w={31} className="ml-[6px]">Rotación</T>
          <div className="ml-[7px]"><Spin w="w-[60px]" t="0,0 °" tw={19} /></div>
          <div className="ml-[5px]"><Check on /></div>
          <T w={44.5} className="ml-[3px]">Representar</T>
          <div className="ml-[12px]"><Icon n="crs" s={11} /></div>
          <T w={40} className="ml-[3px]">EPSG:3042</T>
          <div className="ml-[13px]"><Icon n="bubble" s={12} /></div>
        </div>
        <Dialog />
      </div>

      <div className="absolute inset-0 font-['Noto_Sans',sans-serif] text-[#2c3a66]">
        <div className="absolute top-[157px] left-[829px] text-[24px] leading-[28px]"><T w={281}>Input: cuadríacula-airbnb</T></div>
        <svg viewBox="0 0 20 350" width="20" height="350" className="absolute top-[202px] left-[819px]">
          <path d="M10 0v344M1.500 336l8.500 9.500 8.500-9.500" fill="none" stroke="#2c3a66" strokeWidth="2" />
        </svg>
        <svg viewBox="0 0 20 390" width="20" height="390" className="absolute top-[642px] left-[970px]">
          <path d="M10 2v387M1.500 10.500L10 2 18.500 10.500" fill="none" stroke="#2c3a66" strokeWidth="2" />
        </svg>
        <div className="absolute top-[848px] left-[1003px] h-[38px] w-[68px] border-2 border-[#2c3a66]" />
        <div className="absolute top-[1040px] left-[970px] flex flex-col items-start">
          <div className="text-[24px] leading-[28px]"><T w={179}>Guardar archivo</T></div>
          <div className="mt-[12px] text-[27px] leading-[34.7px] font-light italic"><T w={541}>Si no se guarda, se crea un archivo temporal</T></div>
          <div className="text-[27px] leading-[34.7px] font-light italic"><T w={430}>que se pierde al cerrar el programa</T></div>
        </div>
      </div>
    </div>
  );
}
